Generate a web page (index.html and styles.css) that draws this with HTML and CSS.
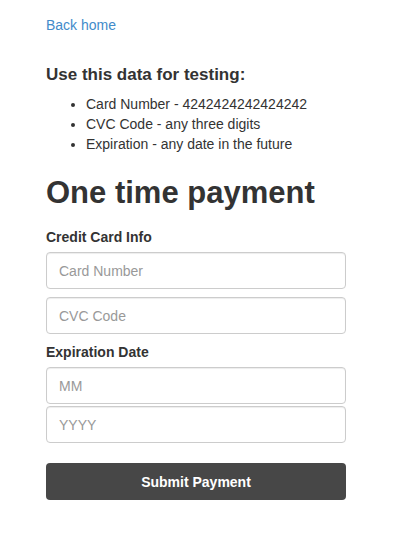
FILE: index.html
```html
<!DOCTYPE html>
<html>
<head>
<meta charset="utf-8">
<link rel="stylesheet" href="styles.css">
</head>
<body>
<div class="container">
  <a class="back" href="#">Back home</a>
  <h3 class="test-title">Use this data for testing:</h3>
  <ul class="test-list">
    <li>Card Number - 4242424242424242</li>
    <li>CVC Code - any three digits</li>
    <li>Expiration - any date in the future</li>
  </ul>
  <h1 class="title">One time payment</h1>
  <form class="form">
    <label class="label">Credit Card Info</label>
    <input class="input" type="text" placeholder="Card Number">
    <input class="input" type="text" placeholder="CVC Code">
    <label class="label label-exp">Expiration Date</label>
    <input class="input input-tight" type="text" placeholder="MM">
    <input class="input input-last" type="text" placeholder="YYYY">
    <button class="submit" type="button">Submit Payment</button>
  </form>
</div>
</body>
</html>
```
FILE: styles.css
```css
* { box-sizing: border-box; }
html, body { margin: 0; padding: 0; background: #fff; }
body {
  font-family: "Liberation Sans", Arial, sans-serif;
  font-size: 14px;
  line-height: 20px;
  color: #333;
}
.container {
  width: 300px;
  margin-left: 46px;
  padding-top: 15px;
}
.back {
  display: block;
  color: #428bca;
  text-decoration: none;
  font-size: 14px;
  line-height: 20px;
}
.test-title {
  margin: 29px 0 0;
  font-size: 17px;
  font-weight: bold;
  line-height: 22px;
}
.test-list {
  margin: 8px 0 0;
  padding-left: 40px;
}
.test-list li { line-height: 20px; }
.title {
  margin: 21px 0 0;
  font-size: 31px;
  font-weight: bold;
  line-height: 36px;
}
.form {
  display: flex;
  flex-direction: column;
  margin-top: 16px;
}
.label {
  font-weight: bold;
  font-size: 14px;
  line-height: 20px;
  margin-bottom: 5px;
}
.label-exp { margin-top: 0; }
.input {
  height: 37px;
  border: 1px solid #ccc;
  border-radius: 4px;
  padding: 6px 12px;
  font-family: "Liberation Sans", Arial, sans-serif;
  font-size: 14px;
  color: #333;
  margin-bottom: 8px;
  box-shadow: inset 0 1px 1px rgba(0,0,0,0.075);
}
.input::placeholder { color: #999; }
.input-tight { margin-bottom: 2px; }
.input-last { margin-bottom: 0; }
.submit {
  margin-top: 20px;
  height: 37px;
  border: none;
  border-radius: 4px;
  background: #474747;
  color: #fff;
  font-family: "Liberation Sans", Arial, sans-serif;
  font-weight: bold;
  font-size: 14px;
}
```
